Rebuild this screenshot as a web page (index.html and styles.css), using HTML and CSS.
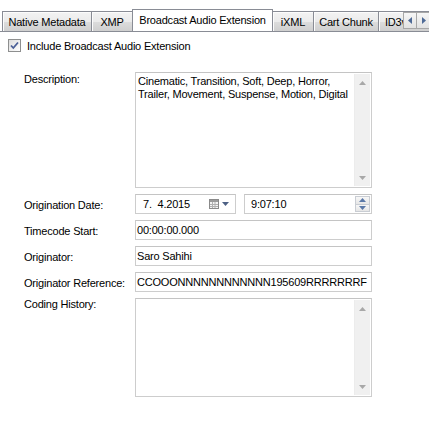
FILE: index.html
```html
<!DOCTYPE html>
<html>
<head>
<meta charset="utf-8">
<link rel="stylesheet" href="styles.css">
</head>
<body>
<div class="tabstrip">
  <div class="tabs">
    <div class="tab w-native">Native Metadata</div>
    <div class="tab w-xmp">XMP</div>
    <div class="tab tab-active w-bext">Broadcast Audio Extension</div>
    <div class="tab w-ixml">iXML</div>
    <div class="tab w-cart">Cart Chunk</div>
    <div class="tab w-id3">ID3v2</div>
  </div>
  <div class="tabscroll">
    <div class="sbtn"><svg width="5" height="7" viewBox="0 0 5 7"><path d="M4 0 L0 3.5 L4 7 Z" fill="#4e6a96"/></svg></div>
    <div class="sbtn"><svg width="5" height="7" viewBox="0 0 5 7"><path d="M1 0 L5 3.5 L1 7 Z" fill="#4e6a96"/></svg></div>
  </div>
</div>

<div class="content">
  <label class="check">
    <span class="box"><svg width="11" height="11" viewBox="0 0 11 11"><path d="M2 5.5 L4.3 8 L9 2.5" fill="none" stroke="#4a5f97" stroke-width="1.8"/></svg></span>
    <span>Include Broadcast Audio Extension</span>
  </label>

  <div class="form">
    <div class="lbl lbl-top">Description:</div>
    <div class="area area-desc">
      <div class="area-text">Cinematic, Transition, Soft, Deep, Horror,<br>Trailer, Movement, Suspense, Motion, Digital</div>
      <div class="vscroll">
        <svg width="7" height="4" viewBox="0 0 7 4"><path d="M0 4 L3.5 0 L7 4 Z" fill="#a8a8a8"/></svg>
        <svg width="7" height="4" viewBox="0 0 7 4"><path d="M0 0 L3.5 4 L7 0 Z" fill="#a8a8a8"/></svg>
      </div>
    </div>

    <div class="lbl">Origination Date:</div>
    <div class="daterow">
      <div class="field date">
        <span class="date-text">7.&nbsp; 4.2015</span>
        <span class="cal">
          <svg width="10" height="10" viewBox="0 0 10 10">
            <rect x="0.5" y="0.5" width="9" height="9" fill="#f4f4f4" stroke="#8a8a8a"/>
            <rect x="1" y="1" width="8" height="2" fill="#9a9a9a"/>
            <path d="M1 5.5 H9 M1 7.5 H9 M3.5 3 V9 M6 3 V9" stroke="#b0b0b0" stroke-width="1"/>
          </svg>
          <svg width="7" height="4" viewBox="0 0 7 4"><path d="M0 0 L7 0 L3.5 4 Z" fill="#4d6185"/></svg>
        </span>
      </div>
      <div class="field time">
        <span class="time-text">9:07:10</span>
        <span class="spin">
          <span class="spin-btn"><svg width="7" height="4" viewBox="0 0 7 4"><path d="M0 4 L3.5 0 L7 4 Z" fill="#5b79a8"/></svg></span>
          <span class="spin-btn"><svg width="7" height="4" viewBox="0 0 7 4"><path d="M0 0 L3.5 4 L7 0 Z" fill="#5b79a8"/></svg></span>
        </span>
      </div>
    </div>

    <div class="lbl">Timecode Start:</div>
    <div class="field">00:00:00.000</div>

    <div class="lbl">Originator:</div>
    <div class="field">Saro Sahihi</div>

    <div class="lbl">Originator Reference:</div>
    <div class="field clip">CCOOONNNNNNNNNNNN195609RRRRRRRF</div>

    <div class="lbl lbl-top0">Coding History:</div>
    <div class="area area-hist">
      <div class="area-text"></div>
      <div class="vscroll">
        <svg width="7" height="4" viewBox="0 0 7 4"><path d="M0 4 L3.5 0 L7 4 Z" fill="#a8a8a8"/></svg>
        <svg width="7" height="4" viewBox="0 0 7 4"><path d="M0 0 L3.5 4 L7 0 Z" fill="#a8a8a8"/></svg>
      </div>
    </div>
  </div>
</div>
</body>
</html>
```
FILE: styles.css
```css
html, body {
  margin: 0;
  padding: 0;
  background: #ffffff;
}
body {
  font-family: "Liberation Sans", Arial, sans-serif;
  font-size: 11px;
  letter-spacing: -0.2px;
  color: #000;
  width: 429px;
  height: 438px;
  overflow: hidden;
}

/* ---------- tabs ---------- */
.tabstrip {
  position: relative;
  height: 31px;
  border-bottom: 1px solid #898c95;
  overflow: hidden;
}
.tabs {
  display: flex;
  align-items: flex-end;
  height: 31px;
  padding-left: 2px;
}
.tab {
  box-sizing: border-box;
  height: 20px;
  margin-right: -1px;
  border: 1px solid #898c95;
  border-bottom: none;
  background: linear-gradient(#f3f3f3, #ebebeb 50%, #dddddd 51%, #cfcfcf);
  box-shadow: inset 1px 1px 0 #fcfcfc;
  display: flex;
  align-items: center;
  justify-content: center;
  white-space: nowrap;
  padding-top: 1px;
  flex: none;
}
.tab-active {
  height: 23px;
  margin-bottom: -1px;
  background: #ffffff;
  box-shadow: none;
  position: relative;
  z-index: 1;
  padding-bottom: 3px;
}
.w-native { width: 90px; }
.w-xmp { width: 42px; }
.w-bext { width: 141px; }
.w-ixml { width: 42px; }
.w-cart { width: 66px; }
.w-id3 { width: 60px; justify-content: flex-start; padding-left: 6px; }

.tabscroll {
  position: absolute;
  top: 12px;
  left: 403px;
  display: flex;
  z-index: 2;
}
.sbtn {
  box-sizing: border-box;
  width: 14px;
  height: 17px;
  margin-right: -1px;
  border: 1px solid #a7a7a7;
  background: linear-gradient(#f6f6f6, #e2e2e2);
  display: flex;
  align-items: center;
  justify-content: center;
}

/* ---------- content ---------- */
.content {
  padding: 7px 0 0 8px;
}
.check {
  display: flex;
  align-items: center;
  gap: 6px;
  height: 13px;
}
.box {
  box-sizing: border-box;
  width: 13px;
  height: 13px;
  border: 1px solid #8e8f8f;
  background: linear-gradient(135deg, #dcdcdc, #ffffff);
  display: flex;
  align-items: center;
  justify-content: center;
}

.form {
  display: grid;
  grid-template-columns: 111px 237px;
  row-gap: 6px;
  margin-top: 20px;
  padding-left: 16px;
}
.lbl {
  padding-top: 5px;
  line-height: 13px;
  white-space: nowrap;
}
.lbl-top { padding-top: 1px; }
.lbl-top0 { padding-top: 0; }

.field {
  box-sizing: border-box;
  height: 20px;
  border: 1px solid #cdcdcd;
  border-top-color: #c4c4c4;
  background: #fff;
  padding: 0 1px;
  display: flex;
  align-items: center;
  white-space: nowrap;
}
.clip { overflow: hidden; }

.daterow {
  display: flex;
  gap: 8px;
}
.date {
  width: 101px;
  padding-left: 7px;
  padding-right: 6px;
  justify-content: space-between;
}
.cal {
  display: flex;
  align-items: center;
  gap: 3px;
}
.time {
  width: 128px;
  padding-left: 6px;
  padding-right: 1px;
  justify-content: space-between;
}
.spin {
  display: flex;
  flex-direction: column;
  width: 15px;
  height: 16px;
}
.spin-btn {
  box-sizing: border-box;
  flex: 1;
  border: 1px solid #c9cdd3;
  background: linear-gradient(#f7f7f7, #e6e6e6);
  display: flex;
  align-items: center;
  justify-content: center;
}
.spin-btn + .spin-btn { border-top: none; }

.area {
  box-sizing: border-box;
  border: 1px solid #cdcdcd;
  border-top-color: #c4c4c4;
  background: #fff;
  display: flex;
  padding: 1px;
}
.area-desc { height: 116px; }
.area-hist { height: 99px; }
.area-text {
  flex: 1;
  padding: 1px 0 0 1px;
  line-height: 13px;
  white-space: nowrap;
}
.vscroll {
  box-sizing: border-box;
  width: 16px;
  background: #f0f0f0;
  border-left: 1px solid #ececec;
  display: flex;
  flex-direction: column;
  justify-content: space-between;
  align-items: center;
  padding: 7px 0 6px;
}
```
